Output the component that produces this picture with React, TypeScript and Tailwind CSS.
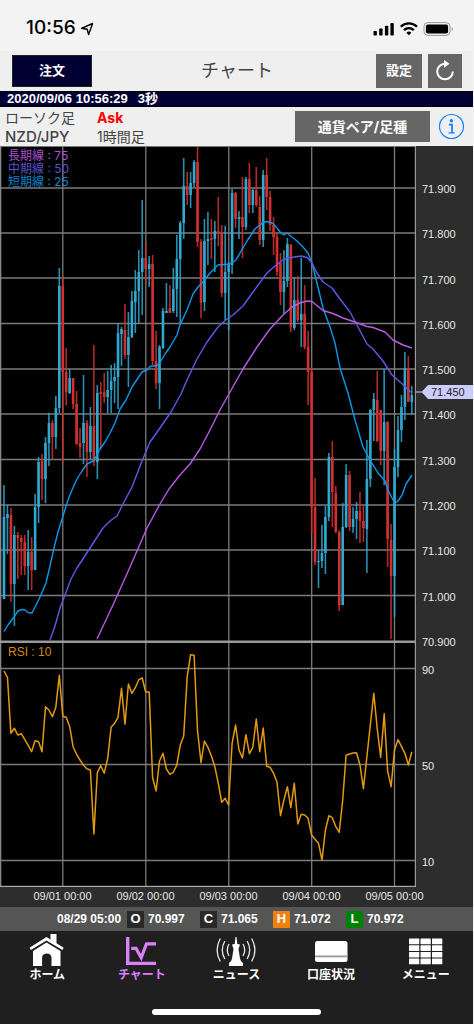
import React from "react";

type Candle = [up: number, high: number, top: number, bottom: number, low: number];

const candles: Candle[] = [
  [1, 485, 517, 599, 599], [1, 505, 514, 518, 554], [0, 508, 515, 584, 602], [1, 526, 535, 584, 626],
  [0, 532, 535, 538, 579], [0, 535, 538, 542, 575], [0, 535, 542, 566, 575], [1, 530, 552, 566, 590],
  [0, 537, 552, 570, 590], [1, 494, 507, 570, 570], [1, 457, 462, 507, 523], [0, 454, 461, 479, 500],
  [1, 437, 443, 479, 503], [1, 413, 423, 443, 466], [0, 420, 423, 437, 459], [1, 396, 408, 437, 449],
  [1, 268, 286, 408, 413], [0, 276, 286, 372, 463], [0, 348, 372, 392, 405], [1, 369, 378, 393, 394],
  [0, 378, 378, 404, 409], [0, 391, 404, 444, 445], [0, 428, 443, 447, 458], [1, 375, 423, 443, 464],
  [0, 420, 423, 452, 477], [1, 407, 426, 452, 459], [0, 345, 426, 462, 466], [1, 385, 393, 462, 479],
  [0, 382, 392, 394, 449], [0, 373, 392, 397, 403], [1, 371, 390, 397, 413], [1, 365, 381, 390, 413],
  [1, 363, 377, 381, 403], [1, 323, 333, 377, 409], [1, 327, 329, 334, 366], [0, 304, 330, 355, 359],
  [1, 312, 337, 355, 387], [1, 291, 301, 337, 338], [1, 270, 291, 302, 333], [1, 250, 272, 291, 323],
  [1, 200, 258, 272, 315], [0, 242, 258, 269, 285], [1, 256, 264, 269, 287], [0, 255, 264, 361, 365],
  [0, 331, 361, 383, 389], [1, 345, 347, 383, 409], [1, 308, 311, 348, 349], [1, 283, 311, 313, 313],
  [0, 285, 308, 313, 313], [1, 268, 289, 311, 313], [1, 235, 259, 289, 317], [1, 221, 223, 259, 323],
  [1, 158, 186, 223, 239], [0, 172, 186, 195, 205], [1, 172, 183, 195, 208], [1, 160, 162, 183, 187],
  [0, 147, 162, 242, 247], [0, 239, 242, 303, 318], [1, 219, 241, 302, 311], [1, 212, 239, 241, 265],
  [0, 219, 238, 240, 259], [1, 221, 231, 239, 272], [0, 197, 231, 233, 246], [0, 225, 233, 293, 297],
  [1, 226, 272, 293, 320], [1, 262, 265, 272, 330], [1, 189, 193, 265, 274], [0, 192, 193, 219, 228],
  [1, 211, 217, 219, 239], [0, 177, 217, 227, 258], [1, 177, 179, 227, 230], [0, 163, 179, 205, 213],
  [1, 189, 190, 205, 213], [0, 167, 190, 205, 207], [0, 196, 207, 240, 245], [1, 170, 175, 240, 247],
  [0, 158, 175, 197, 210], [0, 191, 197, 225, 231], [0, 217, 225, 237, 255], [0, 233, 237, 272, 276],
  [0, 253, 263, 292, 305], [1, 250, 281, 292, 314], [1, 238, 244, 281, 287], [0, 244, 245, 327, 332],
  [1, 277, 300, 328, 330], [0, 276, 300, 320, 322], [1, 258, 314, 320, 347], [0, 285, 314, 347, 349],
  [0, 331, 347, 372, 405], [0, 368, 372, 507, 533], [0, 478, 507, 562, 565], [1, 550, 561, 562, 588],
  [1, 525, 553, 561, 568], [1, 506, 517, 553, 574], [1, 453, 457, 517, 521], [0, 441, 457, 492, 527],
  [0, 486, 493, 532, 533], [0, 530, 532, 605, 611], [1, 503, 527, 605, 605], [1, 464, 475, 527, 528],
  [0, 471, 475, 527, 531], [1, 507, 519, 527, 533], [1, 502, 511, 519, 539], [0, 492, 511, 521, 543],
  [0, 505, 521, 528, 542], [1, 440, 479, 529, 573], [1, 409, 410, 479, 487], [1, 393, 399, 410, 441],
  [0, 371, 400, 441, 442], [0, 410, 410, 451, 465], [1, 369, 422, 451, 485], [0, 421, 422, 539, 567],
  [0, 524, 540, 576, 639], [1, 449, 467, 576, 617], [1, 416, 430, 467, 477], [1, 395, 407, 430, 442],
  [1, 352, 368, 407, 420], [0, 356, 368, 402, 402], [1, 386, 395, 402, 415],
];

const rsi = [
  93, 113, 280, 265, 285, 281, 298, 316, 335, 302, 305, 335, 200, 210, 230, 202, 106, 229, 232, 260, 320, 343, 360, 376,
  386, 390, 582, 398, 377, 400, 355, 262, 250, 232, 145, 253, 132, 160, 143, 119, 114, 156, 156, 413, 453, 363, 340,
  387, 403, 397, 375, 315, 288, 110, 44, 46, 270, 368, 303, 322, 348, 380, 430, 487, 475, 495, 310, 255, 330, 354, 284,
  341, 322, 237, 335, 264, 379, 382, 400, 427, 527, 480, 440, 503, 430, 552, 523, 525, 535, 585, 598, 610, 660, 570,
  527, 533, 560, 577, 480, 346, 342, 339, 338, 375, 446, 350, 255, 160, 265, 352, 221, 392, 440, 330, 299, 319, 340,
  375, 335,
];

const STEP = 3.456;
const xAt = (i: number) => 4 + i * STEP;
const rsiPoints = rsi.map((v, i) => `${xAt(i).toFixed(1)},${(640 + v / 3).toFixed(1)}`).join(" ");

const shortMA =
  "4,631.5 8,625 14,617 18,611 22,609.5 25,610 28,612.5 32,613 35,607 40,597 46,583 50,566 54,548 58,532 63,516 68,500 72,490 77,479 82,471 87,464 93,461 96,457 100,449 105,442 110,433 115,423 120,409 126,400 132,387 142,372 147,370 150,366.5 157,365.5 159,364 165,354 170,347 177,335 180,325 187,310 193,294 198,287 203,282 210,273 218,265 230,264 236,260 240,253 247,241 255,229 263,222.5 267,221.5 273,223.5 277,228 281,233 284,235 287,233 292,237 297,241 303,247 308,253 312,263 317,283 323,308 330,327 335,343 340,368 348,393 355,420 363,447 370,460 378,473 385,481 388,490 392,498 395,503 398,501 402,495 406,484 412,475";
const middleMA =
  "50,640 55,626 60,608 65,595 71,579 77,568 90,548 103,528 110,521 117,516 123,504 132,487 142,461 150,442 160,428 171,412 181,394 187,380 197,359 207,342 218,327 227,319 233,315 243,306 253,292 267,273 275,266 283,260 288,258 301,256 307,257.5 312,263 317,273 323,282 332,288 340,299 350,312 357,325 367,344 373,349 383,361 392,375 400,382 412,393";
const longMA =
  "97,639 113,605 130,567 147,528 160,504 169,489 180,475 190,464 200,449 210,430 220,410 230,392 243,369 257,347 270,329 283,315 292,307 300,303 307,301 312,301.5 323,310.5 333,313.5 343,318 355,322 367,326.5 373,327.5 385,332 393,340 403,345 412,348";

const priceLines = [188, 233, 278, 323.5, 369, 414, 459.5, 505, 550, 595.5];
const rsiLines = [668.5, 764.5, 860.5];
const dayLines = [62.8, 145.8, 228.8, 311.7, 394.5];
const prices = ["71.900", "71.800", "71.700", "71.600", "71.500", "71.400", "71.300", "71.200", "71.100", "71.000", "70.900"];

function Plot() {
  return (
    <svg
      className="block h-[741px] w-full"
      viewBox="0 146 416 741"
      preserveAspectRatio="none"
      role="img"
      aria-label="NZD/JPY 1時間足"
    >
      <rect x="0" y="146" width="416" height="741" fill="#000" />
      <g stroke="#7b7b7b" strokeWidth="1.3">
        {priceLines.map((y) => (
          <line key={y} x1="0" x2="416" y1={y} y2={y} />
        ))}
        {rsiLines.map((y) => (
          <line key={y} x1="0" x2="416" y1={y} y2={y} />
        ))}
        {dayLines.map((x) => (
          <line key={x} x1={x} x2={x} y1="146" y2="887" />
        ))}
      </g>
      {candles.map(([up, high, top, bottom, low], i) => (
        <g key={i} fill={up ? "#30a8cf" : "#d23030"}>
          <rect x={xAt(i) - 0.8} y={high} width="1.6" height={low - high} opacity="0.85" />
          <rect x={xAt(i) - 1.3} y={top} width="2.6" height={Math.max(bottom - top, 1)} />
        </g>
      ))}
      <g fill="none" strokeWidth="1.4" strokeLinejoin="round">
        <polyline points={shortMA} stroke="#0b98ea" />
        <polyline points={middleMA} stroke="#5f5ae6" />
        <polyline points={longMA} stroke="#b95ae6" />
        <polyline points={rsiPoints} stroke="#e39a12" strokeWidth="1.5" />
      </g>
      <rect x="0" y="146" width="416" height="1" fill="#777" />
      <rect x="0" y="146" width="1.3" height="741" fill="#888" />
      <rect x="0" y="640.5" width="416" height="2.5" fill="#999" />
      <rect x="414.8" y="146" width="1.7" height="741" fill="#999" />
      <rect x="0" y="885.8" width="416" height="1.4" fill="#aaa" />
    </svg>
  );
}

function StatusIcons() {
  return (
    <svg className="h-4 w-[82px]" viewBox="0 0 82 16" aria-hidden="true">
      <g fill="#000">
        <rect x="0.5" y="10" width="3.4" height="4.5" rx="0.8" />
        <rect x="6.2" y="7.5" width="3.4" height="7" rx="0.8" />
        <rect x="11.9" y="4.8" width="3.4" height="9.7" rx="0.8" />
        <rect x="17.4" y="2" width="3.4" height="12.5" rx="0.8" />
      </g>
      <g fill="none" stroke="#000" strokeWidth="2.3">
        <path d="M27.8 5.7a11.4 11.4 0 0 1 16.2 0" />
        <path d="M31 9.1a6.9 6.9 0 0 1 9.8 0" />
      </g>
      <path d="M35.9 14.3l-2.5-2.6a3.5 3.5 0 0 1 5 0z" fill="#000" />
      <rect x="51" y="1.6" width="26" height="12.8" rx="3.8" fill="none" stroke="#999" />
      <rect x="52.9" y="3.4" width="22.2" height="9.2" rx="2" fill="#000" />
      <path d="M78.6 6v4c1.7-.7 1.7-3.3 0-4z" fill="#999" />
    </svg>
  );
}

const HomeIcon = () => (
  <svg className="h-8 w-9" viewBox="0 0 36 32" fill="#fff" aria-hidden="true">
    <path d="M21.5 0h6v9.500l-6-3.700z" />
    <path d="M17.5 3l17.200 10.800-1.300 2.200L17.500 6.400 1.800 16l-1.300-2.200z" />
    <path d="M17.5 8.400L31.500 17v15h-9v-8.500c0-5.500-9.400-5.500-9.400 0V32H4V17z" />
  </svg>
);

const ChartIcon = () => (
  <svg className="h-8 w-9" viewBox="0 0 36 32" aria-hidden="true">
    <path d="M3.700 3v27.500M2 29.400h30" fill="none" stroke="#dd80ff" strokeWidth="3.400" />
    <path d="M7.300 14.300h4.700l5.200 9.500 5.300-14h9.500" fill="none" stroke="#dd80ff" strokeWidth="3.200" />
  </svg>
);

const NewsIcon = () => (
  <svg className="h-8 w-10" viewBox="0 0 40 32" aria-hidden="true">
    <path d="M19.500 3h1l.8 7 2.700.500-1.500 4.500 1.500 9.500q.5 3 3 4.500v3H13v-3q2.500-1.500 3-4.500l1.500-9.500-1.500-4.500 2.700-.500z" fill="#fff" />
    <g fill="none" stroke="#e8e8e8" strokeWidth="1.300">
      <path d="M13 10q-3.400 6 0 12M8.800 7q-5 9 0 18M4.300 4.500q-6.400 11.500 0 23" />
      <path d="M27 10q3.400 6 0 12M31.200 7q5 9 0 18M35.700 4.500q6.400 11.500 0 23" />
    </g>
  </svg>
);

const AccountIcon = () => (
  <svg className="h-8 w-9" viewBox="0 0 36 32" aria-hidden="true">
    <rect x="2" y="7" width="32.500" height="21" rx="2.500" fill="#fff" />
    <rect x="2" y="21.500" width="32.500" height="1.800" fill="#999" />
  </svg>
);

const MenuIcon = () => (
  <svg className="h-8 w-9" viewBox="0 0 36 32" fill="#fff" aria-hidden="true">
    {[4.5, 11.2, 17.9, 24.6].map((y) =>
      [1, 12.5, 24].map((x) => <rect key={`${x}-${y}`} x={x} y={y} width="10.300" height="5.700" rx="0.500" />),
    )}
  </svg>
);

const tabs = [
  { label: "ホーム", Icon: HomeIcon },
  { label: "チャート", Icon: ChartIcon },
  { label: "ニュース", Icon: NewsIcon },
  { label: "口座状況", Icon: AccountIcon },
  { label: "メニュー", Icon: MenuIcon },
];

const quotes = [
  { mark: "O", value: "70.997", box: "bg-[#292929]" },
  { mark: "C", value: "71.065", box: "bg-[#292929]" },
  { mark: "H", value: "71.072", box: "bg-[#f08010]" },
  { mark: "L", value: "70.972", box: "bg-[#008000]" },
];

export default function App() {
  return (
    <div className="flex min-h-screen flex-col bg-[#f3f3f3] pr-px font-['Liberation_Sans','Noto_Sans_CJK_JP',sans-serif]">
      <div className="flex h-[51px] items-center justify-between pt-1.5 pr-[18px] pl-[26px] font-['Inter',sans-serif] text-black">
        <div className="flex items-center gap-1">
          <span className="text-[19px] font-medium">10:56</span>
          <svg className="size-3.5" viewBox="0 0 14 14" fill="none" stroke="#000" strokeWidth="1.4" strokeLinejoin="round" aria-hidden="true">
            <path d="M12.600 1.500L8.600 12.500l-1.400-5.300L1.500 6.300z" />
          </svg>
        </div>
        <StatusIcons />
      </div>

      <header className="grid h-10 grid-cols-[1fr_auto_1fr] items-center bg-[#efefef] pr-[11px] pl-3">
        <button className="h-8 w-20 justify-self-start border border-[#222] bg-[#000033] text-[13px] font-bold text-white">注文</button>
        <h1 className="text-lg text-[#444]">チャート</h1>
        <div className="flex gap-1.5 justify-self-end">
          <button className="h-[34px] w-[46px] bg-[#666] text-[13px] font-bold text-white">設定</button>
          <button className="flex h-[34px] w-[34px] items-center justify-center bg-[#666]" aria-label="更新">
            <svg className="size-6" viewBox="0 0 24 24" aria-hidden="true">
              <path d="M12 4.700a7.800 7.800 0 1 0 7.800 7.800" fill="none" stroke="#fff" strokeWidth="2" />
              <path d="M11 1l5.500 3.700-5.500 4z" fill="#fff" />
            </svg>
          </button>
        </div>
      </header>

      <div className="flex h-4 items-center gap-2.5 border-y border-black bg-[#000033] pl-[7px] text-[13px] leading-[14px] font-bold text-white">
        <span>2020/09/06 10:56:29</span>
        <span>3秒</span>
      </div>

      <div className="flex h-[39px] items-center bg-[#efefef] pr-2 pl-[5px] font-['Inter','Noto_Sans_CJK_JP',sans-serif] text-sm leading-[19px] text-[#444]">
        <dl className="grid flex-1 grid-cols-[92px_1fr]">
          <dt>ローソク足</dt>
          <dd className="font-bold text-[#ff0000]">Ask</dd>
          <dt className="text-[15px] leading-[19px] font-medium">NZD/JPY</dt>
          <dd>1時間足</dd>
        </dl>
        <button className="h-[31px] w-[135px] bg-[#666] font-bold text-white">通貨ペア/足種</button>
        <button className="ml-2 size-[27px]" aria-label="情報">
          <svg viewBox="0 0 27 27" fill="none" stroke="#1683f5" aria-hidden="true">
            <circle cx="13.500" cy="13.500" r="12" strokeWidth="1.200" />
            <circle cx="13.400" cy="7.800" r="1.700" fill="#1683f5" stroke="none" />
            <path d="M10.800 11.700h3.200v8" strokeWidth="1.800" />
            <path d="M10.600 19.900h6" strokeWidth="1.300" />
          </svg>
        </button>
      </div>

      <main className="flex bg-[#2d2d2d] text-[#e8e8e8]">
        <div className="relative min-w-0 flex-1">
          <Plot />
          <div className="absolute top-[3px] left-2 font-['Inter','Noto_Sans_CJK_JP',sans-serif] text-xs leading-[13px]">
            <p className="text-[#a953d0]">長期線 : 75</p>
            <p className="text-[#5652cc]">中期線 : 50</p>
            <p className="text-[#0a88cf]">短期線 : 25</p>
          </div>
          <p className="absolute top-[498px] left-2 text-xs leading-4 text-[#d18c0e]">RSI : 10</p>
        </div>
        <div className="relative w-[57px] pt-[35px] pl-[6px] text-[11px] leading-4">
          <ul className="flex h-[469px] flex-col justify-between">
            {prices.map((p) => (
              <li key={p}>{p}</li>
            ))}
          </ul>
          <ul className="mt-3 flex h-52 flex-col justify-between">
            <li>90</li>
            <li>50</li>
            <li>10</li>
          </ul>
          <div className="absolute top-[239px] right-0 left-0 h-[14px] text-[#222]">
            <svg className="absolute inset-0 h-full w-full" viewBox="0 0 57 14" preserveAspectRatio="none" aria-hidden="true">
              <path d="M0 6.500h6L12 0h45v14H12L6 7.500H0z" fill="#ccccff" />
            </svg>
            <span className="relative block pl-[15px] leading-[14px]">71.450</span>
          </div>
        </div>
      </main>

      <div className="grid h-5 grid-cols-5 bg-[#2d2d2d] pr-[37px] pl-[21px] text-center text-[11px] leading-[18px] text-[#e8e8e8]">
        {["09/01", "09/02", "09/03", "09/04", "09/05"].map((d) => (
          <span key={d}>{d} 00:00</span>
        ))}
      </div>

      <div className="flex h-6 items-center bg-[#555] pl-[57px] text-xs font-bold text-white">
        <span className="w-[70px]">08/29 05:00</span>
        {quotes.map((q) => (
          <div key={q.mark} className="flex w-[73px] items-center gap-1">
            <span className={`flex size-[17px] items-center justify-center text-[13px] ${q.box}`}>{q.mark}</span>
            <span>{q.value}</span>
          </div>
        ))}
      </div>

      <footer className="flex flex-1 flex-col justify-between bg-[#1f1f1f]">
        <nav className="grid grid-cols-5 pt-[3px]">
          {tabs.map(({ label, Icon }) => (
            <a
              key={label}
              href="#"
              className={`flex flex-col items-center text-xs leading-[18px] font-bold ${label === "チャート" ? "text-[#dd80ff]" : "text-white"}`}
            >
              <Icon />
              {label}
            </a>
          ))}
        </nav>
        <div className="mb-[9px] h-[6px] w-[169px] self-center rounded-full bg-white" />
      </footer>
    </div>
  );
}
